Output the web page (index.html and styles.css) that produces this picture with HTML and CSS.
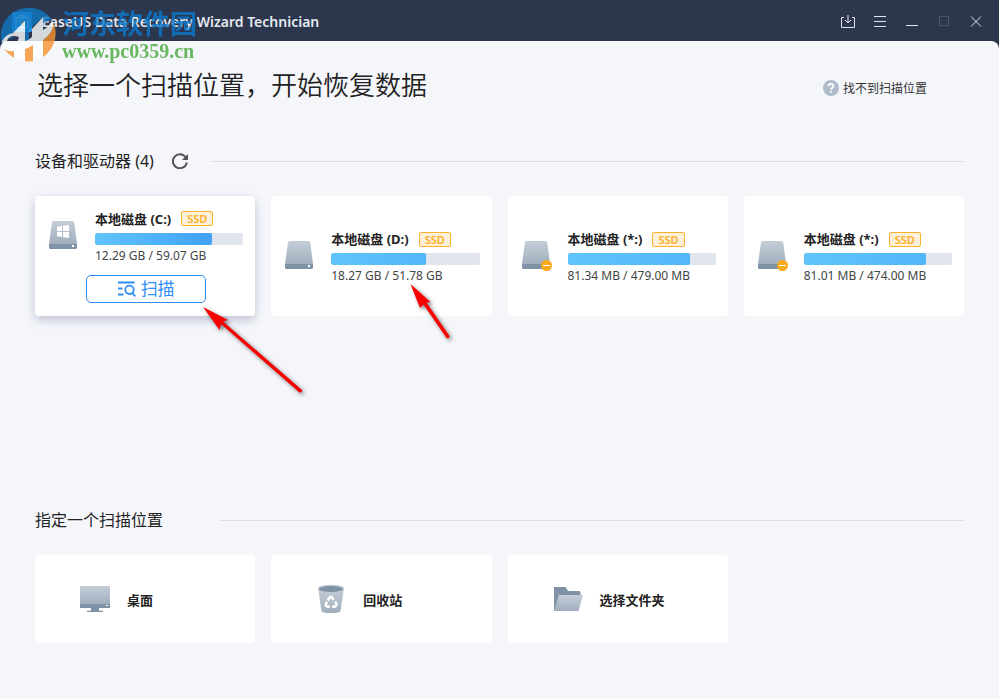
FILE: index.html
```html
<!DOCTYPE html>
<html lang="zh-CN">
<head>
    <title>EaseUS Data Recovery Wizard Technician</title>
    <meta http-equiv="content-type" content="text/html; charset=UTF-8"/>
    <link rel="stylesheet" href="styles.css">
</head>
<body>
    <!-- 公共图标 -->
    <svg class="defs" width="0" height="0" aria-hidden="true">
        <defs>
            <linearGradient id="metal" x1="0" y1="0" x2="0" y2="1">
                <stop offset="0" stop-color="#c5ced8"/>
                <stop offset="1" stop-color="#a0aebd"/>
            </linearGradient>
            <symbol id="disk" viewBox="0 0 32 32">
                <path d="M3 1.5Q3.2 0 4.700 0H23.300Q24.800 0 25.300 1.500L28 23H0Z" transform="translate(0 2)" fill="url(#metal)"/>
                <path d="M0 25H28V28.500Q28 30 26.500 30H1.500Q0 30 0 28.500Z" fill="#8093a6"/>
                <rect x="23" y="26" width="2" height="2" fill="#fff"/>
            </symbol>
        </defs>
    </svg>
    <header class="top_bar">
        <svg class="app_icon" width="20" height="20" viewBox="0 0 20 20">
            <rect width="20" height="20" rx="2" fill="#2f9bf4"/>
            <path d="M4 5.500H16V15.500H4ZM7.500 5.500V3.500H12.500V5.500" fill="none" stroke="#a9d6fb" stroke-width="1.500"/>
            <path d="M10 8V13M7.500 10.500H12.500" stroke="#c9a44c" stroke-width="2"/>
        </svg>
        <span class="app_name">EaseUS Data Recovery Wizard Technician</span>
        <div class="win_btns">
            <button type="button" aria-label="导入">
                <svg width="16" height="16" viewBox="0 0 16 16"><path d="M4 3.500H1.500V13.500H14.500V3.500H12M8 1V9M5 6L8 9L11 6"/></svg>
            </button>
            <button type="button" aria-label="菜单">
                <svg width="16" height="16" viewBox="0 0 16 16"><path d="M2 2.500H14M2 7.500H14M2 12.500H14"/></svg>
            </button>
            <button type="button" aria-label="最小化">
                <svg width="16" height="16" viewBox="0 0 16 16"><path d="M2 11.500H14"/></svg>
            </button>
            <button type="button" aria-label="最大化" disabled>
                <svg width="16" height="16" viewBox="0 0 16 16"><path d="M3.500 2.500H12.500V11.500H3.500Z"/></svg>
            </button>
            <button type="button" aria-label="关闭">
                <svg width="16" height="16" viewBox="0 0 16 16"><path d="M3 2.500L13 12.500M13 2.500L3 12.500"/></svg>
            </button>
        </div>
    </header>
    <main class="content_main">
        <div class="title_row">
            <h1>选择一个扫描位置，开始恢复数据</h1>
            <a class="help" href="#">
                <svg width="16" height="16" viewBox="0 0 16 16"><circle cx="8" cy="8" r="8" fill="#aebbca"/><path d="M5.500 6.300C5.500 3.200 10.500 3.200 10.500 6.100C10.500 7.800 8 7.800 8 9.800M8 11V12.800" fill="none" stroke="#fff" stroke-width="1.700"/></svg>
                找不到扫描位置
            </a>
        </div>

        <section class="drives">
            <div class="section_head">
                <h2>设备和驱动器 (4)</h2>
                <button class="refresh" type="button" aria-label="刷新">
                    <svg width="16" height="16" viewBox="0 0 16 16"><path d="M13.600 4.200A7 7 0 1 0 14.800 9.500" fill="none" stroke="#555" stroke-width="2"/><path d="M16 1V7H10Z" fill="#555"/></svg>
                </button>
                <i class="line"></i>
            </div>
            <div class="card_list">
                <div class="card drive active">
                    <div class="drive_info">
                        <svg class="disk" width="32" height="32" viewBox="0 0 32 32"><use href="#disk"/><path d="M8 7.800L13 7V12H8ZM14 6.800L20 6V12H14ZM8 13H13V18L8 17.200ZM14 13H20V19L14 18.200Z" fill="#fff"/></svg>
                        <div class="detail">
                            <div class="name">本地磁盘 (C:)<span class="tag">SSD</span></div>
                            <div class="bar"><div class="used" style="width:79%"></div></div>
                            <div class="size">12.29 GB / 59.07 GB</div>
                        </div>
                    </div>
                    <button class="scan" type="button">
                        <svg width="18" height="16" viewBox="0 0 18 16" fill="none" stroke="#2f8df5" stroke-width="1.800"><path d="M0 1.500H16.500M0 7.500H4.500M0 13.500H5.500"/><circle cx="11.500" cy="8.800" r="4.200"/><path d="M14.300 12L17.300 15.300"/></svg>
                        扫描
                    </button>
                </div>
                <div class="card drive">
                    <div class="drive_info">
                        <svg class="disk" width="32" height="32" viewBox="0 0 32 32"><use href="#disk"/></svg>
                        <div class="detail">
                            <div class="name">本地磁盘 (D:)<span class="tag">SSD</span></div>
                            <div class="bar"><div class="used" style="width:64%"></div></div>
                            <div class="size">18.27 GB / 51.78 GB</div>
                        </div>
                    </div>
                </div>
                <div class="card drive">
                    <div class="drive_info">
                        <svg class="disk" width="32" height="32" viewBox="0 0 32 32"><use href="#disk"/><circle cx="24.500" cy="26.500" r="5.500" fill="#fbaa19"/><path d="M21 26.500H28" stroke="#fff"/></svg>
                        <div class="detail">
                            <div class="name">本地磁盘 (*:)<span class="tag">SSD</span></div>
                            <div class="bar"><div class="used" style="width:82.5%"></div></div>
                            <div class="size">81.34 MB / 479.00 MB</div>
                        </div>
                    </div>
                </div>
                <div class="card drive">
                    <div class="drive_info">
                        <svg class="disk" width="32" height="32" viewBox="0 0 32 32"><use href="#disk"/><circle cx="24.500" cy="26.500" r="5.500" fill="#fbaa19"/><path d="M21 26.500H28" stroke="#fff"/></svg>
                        <div class="detail">
                            <div class="name">本地磁盘 (*:)<span class="tag">SSD</span></div>
                            <div class="bar"><div class="used" style="width:82.5%"></div></div>
                            <div class="size">81.01 MB / 474.00 MB</div>
                        </div>
                    </div>
                </div>
            </div>
        </section>

        <section class="places">
            <div class="section_head">
                <h2>指定一个扫描位置</h2>
                <i class="line"></i>
            </div>
            <div class="card_list">
                <button class="card place" type="button">
                    <svg width="32" height="32" viewBox="0 0 32 32"><path d="M1 3H31V21H1Z" fill="url(#metal)"/><path d="M1 21H31V25H20V27.800H24V29H8V27.800H12V25H1Z" fill="#8093a6"/><rect x="27" y="22" width="2" height="1" fill="#fff"/></svg>
                    桌面
                </button>
                <button class="card place" type="button">
                    <svg width="32" height="32" viewBox="0 0 32 32"><path d="M3 5H29L25.500 28Q25 30 16 30T6.500 28Z" fill="url(#metal)"/><ellipse cx="16" cy="5.500" rx="13" ry="3.800" fill="#bcc7d2"/><ellipse cx="16" cy="6" rx="12" ry="3" fill="#8093a6"/><g fill="none" stroke="#fff" stroke-width="2.600"><path d="M12.800 17.500L14.500 14.600Q15.800 13 17.200 14.600L18.500 16.800"/><path d="M20 18.500L21.300 20.600Q21.800 23.300 19.500 23.600H17"/><path d="M14.800 23.600H12.500Q10.200 23 11 20.600L12.200 18.700"/></g></svg>
                    回收站
                </button>
                <button class="card place" type="button">
                    <svg width="32" height="32" viewBox="0 0 32 32"><path d="M2 4H13.500L16 8H27Q28.500 8 28.500 9.500V16L2 28Z" fill="#8093a6"/><path d="M7 12H31L26.500 28H2Z" fill="url(#metal)"/></svg>
                    选择文件夹
                </button>
            </div>
        </section>
    </main>

    <!-- 箭头标注 -->
    <svg class="arrows" width="480" height="420" viewBox="0 0 480 420" aria-hidden="true">
        <g fill="#f80000">
            <path d="M203 307L228 320L223 321.500L302 390Q302.500 393 299.500 392.500L221 324L219.500 330Z"/>
            <path d="M410.500 284L430.500 302L426.500 302.500L449.500 336Q449.500 339 446.500 338L423.500 304.500L420 308Z"/>
        </g>
    </svg>

    <!-- 水印 -->
    <div class="watermark">
        <svg width="60" height="60" viewBox="0 0 60 60">
            <path d="M1 36A28 28 0 0 1 52 17C44 19 40 21 43 24V14L29 27V38L25 39V18L10 33L14 35C6 35 3 38 3 42Q1 39 1 36Z" fill="#0f78c4"/>
            <path d="M43 36Q51 31 53 19Q57 27 55 36Q52 48 43 54Z" fill="#f7932e"/>
            <path d="M4 46Q9 49 14 48V55Q8 51 4 46ZM25 46L33 42V58Q29 59 25 58Z" fill="#f7932e"/>
            <path d="M2 38Q6 31 13 30L25 18V38Q29 37 32 34V26L43 14V27Q50 23 52 17Q56 27 43 37V54L33 58V42L25 46V58L14 55V48Q2 49 2 38ZM7 38Q8 43 17 40L19 34Q9 31 7 38Z" fill="#fff" fill-rule="evenodd"/>
        </svg>
        <div class="mark_text">
            <strong>河东软件园</strong>
            <span>www.pc0359.cn</span>
        </div>
    </div>
</body>
</html>
```
FILE: styles.css
```css
*{
    box-sizing: border-box;
}
body{
    margin: 0;
    min-height: 100vh;
    background-color: #2c374e;
    color: #222;
    font-family: "Noto Sans", "Noto Sans CJK SC", sans-serif;
    font-size: 13px;
    display: flex;
    flex-direction: column;
}
button{
    font-family: inherit;
    color: inherit;
    border: none;
    background: none;
    padding: 0;
}
svg{
    flex: none;
    display: block;
}
h1,h2{
    margin: 0;
    white-space: nowrap;
}
.defs{
    position: absolute;
}
/* 标题栏 */
.top_bar{
    height: 41px;
    padding: 3px 7px 0 12px;
    display: flex;
    align-items: center;
    color: #e6e9ee;
}
.app_name{
    margin-left: 10px;
    font-size: 14px;
    font-weight: 600;
    line-height: 20px;
}
.win_btns{
    margin-left: auto;
    display: flex;
}
.win_btns button{
    width: 32px;
    height: 32px;
    display: flex;
    align-items: center;
    justify-content: center;
}
.win_btns path{
    fill: none;
    stroke: #e3e6eb;
}
.win_btns button:disabled path{
    stroke: #4a566b;
}
/* 内容 */
.content_main{
    flex: 1;
    padding: 24px 34px 40px 35px;
    background-color: #f4f6fa;
    border-radius: 8px 8px 0 0;
}
.title_row{
    height: 40px;
    padding: 0 38px 0 2px;
    display: flex;
    align-items: center;
    justify-content: space-between;
}
.title_row h1{
    font-size: 26px;
    font-weight: 350;
    line-height: 40px;
}
.help{
    padding-top: 6px;
    display: flex;
    align-items: center;
    gap: 4px;
    font-size: 12px;
    color: #333;
    text-decoration: none;
}
.section_head{
    height: 24px;
    display: flex;
    align-items: center;
}
.section_head h2{
    font-size: 16px;
    font-weight: 400;
    line-height: 24px;
}
.section_head .line{
    flex: 1;
    height: 1px;
    margin-left: 22px;
    background-color: #dcdfe4;
}
.refresh{
    margin-left: 18px;
}
.drives{
    padding-top: 44px;
}
.places{
    padding-top: 192px;
}
.places .line{
    margin-left: 56px;
}
.card_list{
    margin-top: 23px;
    padding-right: 1px;
    display: grid;
    grid-template-columns: repeat(4, 1fr);
    gap: 16px;
}
.card{
    background-color: #fff;
    border-radius: 4px;
}
.drive{
    height: 120px;
    padding: 2px 12px 0 14px;
    display: flex;
    flex-direction: column;
    justify-content: center;
}
.drive.active{
    padding-top: 0;
    box-shadow: 0 4px 10px rgba(60,60,120,.28);
}
.drive_info{
    display: flex;
    gap: 14px;
}
.disk{
    margin-top: 9px;
}
.detail{
    flex: 1;
}
.name{
    display: flex;
    align-items: center;
    font-weight: 700;
    line-height: 18px;
    white-space: nowrap;
}
.tag{
    margin-left: 10px;
    padding: 0 5px;
    border: 1px solid #fbb12d;
    border-radius: 2px;
    background-color: #fff1d9;
    color: #fbae27;
    font-size: 11px;
    font-weight: 600;
    line-height: 13px;
}
.bar{
    height: 12px;
    margin-top: 5px;
    border-radius: 2px;
    background-color: #e1e5ed;
    overflow: hidden;
}
.used{
    height: 100%;
    border-radius: 2px;
    background: linear-gradient(to right, #60c4fb, #53b6f9);
}
.active .used{
    background: linear-gradient(to right, #60c4fb, #41a2f6);
}
.size{
    margin-top: 3px;
    font-size: 12px;
    line-height: 16px;
    color: #444;
    white-space: nowrap;
}
.scan{
    width: 120px;
    height: 28px;
    margin-top: 11px;
    align-self: center;
    display: flex;
    align-items: center;
    justify-content: center;
    gap: 5px;
    border: 1px solid #2f8df5;
    border-radius: 5px;
    color: #2f8df5;
    font-size: 17px;
    line-height: 24px;
}
.place{
    height: 88px;
    padding-left: 44px;
    display: flex;
    align-items: center;
    gap: 16px;
    font-size: 13px;
    font-weight: 700;
}
/* 覆盖层 */
.arrows{
    position: absolute;
    left: 0;
    top: 0;
    pointer-events: none;
    filter: drop-shadow(2px 2px 2px rgba(0,0,0,.5));
}
.watermark{
    position: absolute;
    left: 0;
    top: 3px;
    display: flex;
    gap: 2px;
    opacity: .8;
    pointer-events: none;
}
.mark_text{
    padding-top: 6px;
    display: flex;
    flex-direction: column;
}
.mark_text strong{
    color: #0c78cc;
    font-size: 27px;
    line-height: 30px;
}
.mark_text span{
    color: #48a83c;
    font-family: "Liberation Serif", serif;
    font-size: 20px;
    font-weight: 700;
    line-height: 24px;
}
```
